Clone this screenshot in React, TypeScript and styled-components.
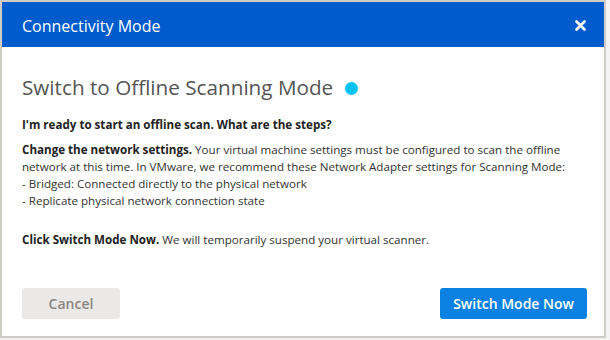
import React from 'react';
import styled, { createGlobalStyle } from 'styled-components';

const GlobalStyle = createGlobalStyle`
  html, body {
    margin: 0;
    padding: 0;
    background: #f3f3f3;
    font-family: "Open Sans", "Liberation Sans", sans-serif;
  }
`;

const Dialog = styled.div`
  width: 606px;
  height: 338px;
  box-sizing: border-box;
  border: 2px solid #cfcbc7;
  background: #ffffff;
  display: flex;
  flex-direction: column;
`;

const Header = styled.div`
  height: 45px;
  background: #005ccc;
  display: flex;
  align-items: center;
  justify-content: space-between;
  padding: 2px 17px 0 20px;
  box-sizing: border-box;
`;

const HeaderTitle = styled.h1`
  margin: 0;
  font-size: 16px;
  font-weight: 400;
  color: #ffffff;
`;

const CloseButton = styled.button`
  border: none;
  background: none;
  padding: 0;
  width: 14px;
  height: 14px;
  display: flex;
  align-items: center;
  justify-content: center;
  cursor: pointer;
`;

const Body = styled.div`
  flex: 1;
  padding: 26px 20px 0 20px;
  color: #333;
`;

const Heading = styled.h2`
  margin: 0;
  font-size: 20.7px;
  font-weight: 400;
  color: #555;
  display: flex;
  align-items: center;
  gap: 12px;
`;

const StatusDot = styled.span`
  width: 13px;
  height: 13px;
  border-radius: 50%;
  background: #00c3f5;
  margin-top: 3px;
`;

const Question = styled.p`
  margin: 16px 0 0 0;
  font-size: 11.6px;
  font-weight: 700;
  color: #222;
`;

const Paragraph = styled.p<{ $gap?: number }>`
  margin: ${p => p.$gap ?? 9}px 0 0 0;
  font-size: 11.6px;
  line-height: 17px;
  color: #333;
  white-space: nowrap;

  strong {
    color: #222;
  }
`;

const Footer = styled.div`
  display: flex;
  justify-content: space-between;
  align-items: center;
  padding: 0 17px 17px 20px;
`;

const Button = styled.button<{ $primary?: boolean }>`
  height: 31px;
  border: none;
  border-radius: 3px;
  font-family: inherit;
  font-size: 14px;
  font-weight: 600;
  padding: 0 13px;
  min-width: 98px;
  background: ${p => (p.$primary ? '#0b82e3' : '#ebe9e7')};
  color: ${p => (p.$primary ? '#ffffff' : '#8a8580')};
  cursor: pointer;
`;

export default function App() {
  return (
    <>
      <GlobalStyle />
      <Dialog>
        <Header>
          <HeaderTitle>Connectivity Mode</HeaderTitle>
          <CloseButton aria-label="Close">
            <svg width="11" height="11" viewBox="0 0 11 11">
              <path d="M1.5 1.5 L9.5 9.5 M9.5 1.5 L1.5 9.5" stroke="#fff" strokeWidth="2.6" strokeLinecap="round" />
            </svg>
          </CloseButton>
        </Header>
        <Body>
          <Heading>
            Switch to Offline Scanning Mode
            <StatusDot />
          </Heading>
          <Question>I'm ready to start an offline scan. What are the steps?</Question>
          <Paragraph>
            <strong>Change the network settings.</strong> Your virtual machine settings must be configured to scan the offline
            <br />network at this time. In VMware, we recommend these Network Adapter settings for Scanning Mode:
            <br />- Bridged: Connected directly to the physical network
            <br />- Replicate physical network connection state
          </Paragraph>
          <Paragraph $gap={22}>
            <strong>Click Switch Mode Now.</strong> We will temporarily suspend your virtual scanner.
          </Paragraph>
        </Body>
        <Footer>
          <Button>Cancel</Button>
          <Button $primary>Switch Mode Now</Button>
        </Footer>
      </Dialog>
    </>
  );
}
